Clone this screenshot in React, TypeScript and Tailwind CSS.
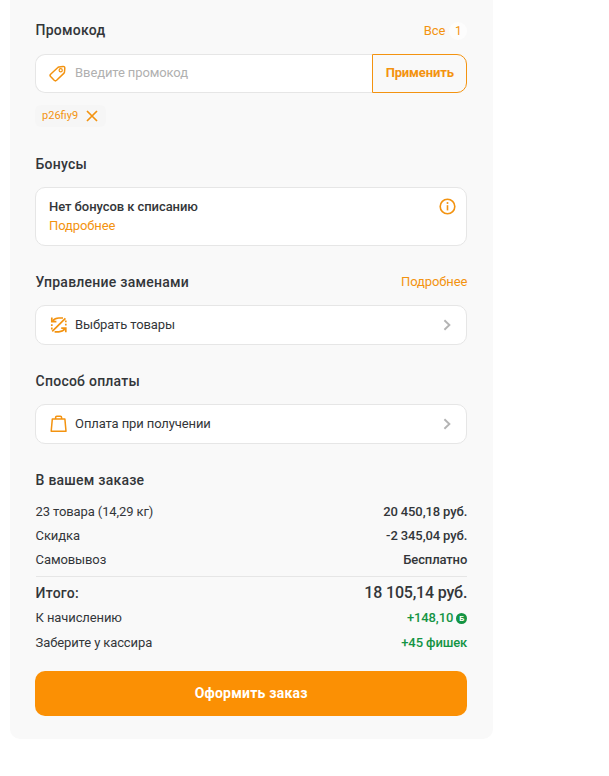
import type { ReactNode } from "react";

function Heading({ children, action }: { children: ReactNode; action?: ReactNode }) {
  return (
    <div className="flex h-5 items-center justify-between pl-[0.5px]">
      <h2 className="text-[14px] leading-5 font-medium tracking-[0.24px]">{children}</h2>
      {action}
    </div>
  );
}

function TagIcon() {
  return (
    <svg width="18" height="18" viewBox="0 0 18 18" fill="none" stroke="#f39310" strokeWidth="1.5" strokeLinejoin="round">
      <path d="M9.9 2 L14 1.5 Q15.8 1.3 15.8 3.1 L15.5 6.9 Q15.4 7.7 14.8 8.4 L7.6 15.3 Q6.4 16.4 5.2 15.3 L1.6 11.6 Q0.5 10.4 1.6 9.2 L8.6 2.7 Q9.2 2.1 9.9 2Z" />
      <circle cx="11.7" cy="5.3" r="1.6" strokeWidth="1.2" />
    </svg>
  );
}

function SwapIcon() {
  return (
    <svg width="18" height="18" viewBox="0 0 18 18" fill="none" stroke="#f39310" strokeWidth="1.7">
      <path d="M2.2 15.4 L15.4 2.4" />
      <path d="M2.6 5 Q5 2 8.8 2 H13" />
      <path d="M1.8 1.6 V5.6 H6.4" />
      <path d="M15 12.8 Q12.6 15.8 8.8 15.8 H4.6" />
      <path d="M15.8 16.2 V12.2 H11.2" />
      <path d="M1.8 8.2 V10 M1.8 11.6 V13.4 M15.8 9.6 V7.8 M15.8 6.2 V4.4" />
    </svg>
  );
}

function BagIcon() {
  return (
    <svg width="18" height="18" viewBox="0 0 18 18" fill="none" stroke="#f39310" strokeWidth="1.5" strokeLinejoin="round">
      <path d="M2.3 4.1 H14.9 L16 16.2 H1.2 Z" />
      <path d="M5.6 4.1 V2.4 Q5.6 1.2 6.8 1.2 H10.4 Q11.6 1.2 11.6 2.4 V4.1" />
    </svg>
  );
}

function Chevron() {
  return (
    <svg width="8" height="12" viewBox="0 0 8 12" fill="none" stroke="#b4b4b4" strokeWidth="1.9">
      <path d="M1.4 1.2 L6.4 6 L1.4 10.8" />
    </svg>
  );
}

function LinkCard({ icon, children }: { icon: ReactNode; children: ReactNode }) {
  return (
    <div className="mt-[13px] flex h-10 items-center rounded-[10px] border border-[#e6e6e6] bg-white pr-[15px] pl-3.5">
      {icon}
      <span className="ml-[7px] grow">{children}</span>
      <Chevron />
    </div>
  );
}

function Row({ label, value }: { label: string; value: string }) {
  return (
    <div className="flex h-6 items-center justify-between">
      <span>{label}</span>
      <span className="font-medium">{value}</span>
    </div>
  );
}

export default function App() {
  return (
    <div className="h-[776px] bg-white pl-[10.4px] font-[Roboto,sans-serif] text-[13px] tracking-[-0.11px] text-[#333639]">
      <main className="h-[739px] w-[483px] rounded-b-[10px] bg-[#f9f9f9] pt-5 pr-[26.2px] pl-[24.7px]">
        <Heading
          action={
            <div className="flex items-center pt-px text-[#f39310]">
              Все
              <span className="ml-1 flex h-[18px] w-[18px] items-center justify-center rounded-full bg-[#fdfdfd] text-[12px]">1</span>
            </div>
          }
        >
          Промокод
        </Heading>
        <div className="mt-3.5 flex h-[39px]">
          <div className="flex grow items-center rounded-l-[10px] border border-r-0 border-[#e6e6e6] bg-white pl-[13px]">
            <TagIcon />
            <span className="ml-2 pb-0.5 text-[#b0b0b0]">Введите промокод</span>
          </div>
          <button className="w-[95px] rounded-r-[10px] border border-[#f39310] pb-0.5 font-bold tracking-[-0.14px] text-[#f39310]">Применить</button>
        </div>
        <div className="mt-3 flex h-[22px] w-[71px] items-center rounded-md bg-[#f6f6f6] pl-[7px] text-[11px] tracking-normal text-[#f39310]">
          <span className="pt-px">p26fiy9</span>
          <svg className="ml-[7.5px]" width="12" height="12" viewBox="0 0 12 12" stroke="#f39310" strokeWidth="1.7">
            <path d="M1 1 L11 11 M11 1 L1 11" />
          </svg>
        </div>

        <div className="mt-[27px]">
          <Heading>Бонусы</Heading>
          <div className="mt-[13px] flex h-[59px] justify-between rounded-[10px] border border-[#e6e6e6] bg-white pt-[9px] pr-[10px] pl-[13px] leading-[19px]">
            <div>
              <div className="font-medium tracking-[-0.07px]">Нет бонусов к списанию</div>
              <div className="text-[#f39310]">Подробнее</div>
            </div>
            <svg className="mt-px" width="17" height="17" viewBox="0 0 17 17" fill="none" stroke="#f39310" strokeWidth="1.6">
              <circle cx="8.5" cy="8.5" r="7.3" />
              <path d="M8.5 7.2 V12.4" />
              <circle cx="8.5" cy="5" r="1" fill="#f39310" stroke="none" />
            </svg>
          </div>
        </div>

        <div className="mt-[26px]">
          <Heading action={<span className="text-[#f39310]">Подробнее</span>}>Управление заменами</Heading>
          <LinkCard icon={<SwapIcon />}>Выбрать товары</LinkCard>
        </div>

        <div className="mt-[26px]">
          <Heading>Способ оплаты</Heading>
          <LinkCard icon={<BagIcon />}>Оплата при получении</LinkCard>
        </div>

        <div className="mt-[26px]">
          <Heading>В вашем заказе</Heading>
          <div className="mt-[10px] ml-[0.5px]">
            <Row label="23 товара (14,29 кг)" value="20 450,18 руб." />
            <Row label="Скидка" value="-2 345,04 руб." />
            <Row label="Самовывоз" value="Бесплатно" />
            <div className="mt-1 border-t border-[#e6e6e6]" />
            <div className="mt-1 flex h-6 items-center justify-between">
              <span className="text-[14px] font-medium tracking-[0.24px]">Итого:</span>
              <span className="text-[16px] font-medium tracking-[-0.18px]">18 105,14 руб.</span>
            </div>
            <div className="mt-px flex h-6 items-center justify-between">
              <span>К начислению</span>
              <span className="flex items-center font-medium text-[#149444]">
                +148,10
                <span className="mt-px ml-[3px] flex h-[11px] w-[11px] items-center justify-center rounded-full bg-[#149444] text-[8px] leading-none font-bold text-white">Б</span>
              </span>
            </div>
            <div className="mt-px flex h-6 items-center justify-between">
              <span>Заберите у кассира</span>
              <span className="font-medium text-[#149444]">+45 фишек</span>
            </div>
          </div>
          <button className="mt-4 h-[45px] w-full rounded-[10px] bg-[#fb9004] text-[14px] font-bold tracking-[0.22px] text-white">
            Оформить заказ
          </button>
        </div>
      </main>
    </div>
  );
}
